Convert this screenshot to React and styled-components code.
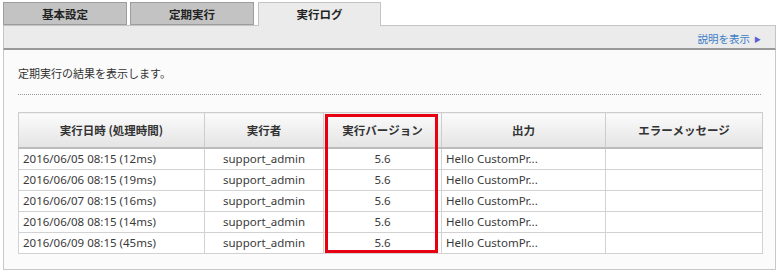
import React from "react"
import styled, { createGlobalStyle } from "styled-components"

const GlobalStyle = createGlobalStyle`
  html, body {
    margin: 0;
    padding: 0;
    background: #ffffff;
  }
  body {
    font-family: "Noto Sans", "Noto Sans CJK JP", sans-serif;
    font-size: 12px;
    color: #333;
  }
`

const Wrapper = styled.div`
  width: 773px;
  padding: 2px 0 0 3px;
`

const TabRow = styled.div`
  display: flex;
  gap: 3px;
  height: 23px;
  position: relative;
  z-index: 1;
`

const Tab = styled.div`
  width: ${p => (p.$active ? 123 : 124)}px;
  height: ${p => (p.$active ? 24 : 23)}px;
  margin-left: ${p => (p.$active ? 1 : 0)}px;
  box-sizing: border-box;
  display: flex;
  align-items: center;
  justify-content: center;
  font-family: "Noto Sans CJK JP", sans-serif;
  font-weight: bold;
  font-size: 11.5px;
  color: #222;
  background: ${p => (p.$active ? "#ebebeb" : "#c3c3c3")};
  border: 1px solid ${p => (p.$active ? "#c4c4c4" : "#9d9d9d")};
  border-bottom: ${p => (p.$active ? "none" : "1px solid #9d9d9d")};
  padding-bottom: ${p => (p.$active ? 2 : 0)}px;
`

const Bar = styled.div`
  height: 25px;
  box-sizing: border-box;
  background: #ebebeb;
  border: 1px solid #c4c4c4;
  border-bottom: 2px solid #999;
  display: flex;
  align-items: flex-end;
  justify-content: flex-end;
  padding: 0 14px 1px 0;
`

const HelpLink = styled.a`
  color: #3b7dc6;
  font-family: "Noto Sans CJK JP", sans-serif;
  font-size: 10.5px;
  text-decoration: none;
  display: flex;
  align-items: center;
  gap: 4px;
  line-height: 16px;
`

const Arrow = styled.span`
  color: #5a5fd0;
  font-size: 7px;
`

const Content = styled.div`
  background: #fbfbfb;
  border: 1px solid #c8c8c8;
  border-top: none;
  padding: 15px 14px 15px 14px;
`

const Lead = styled.p`
  margin: 0;
  font-family: "Noto Sans CJK JP", sans-serif;
  font-size: 11px;
  line-height: 16px;
  color: #333;
`

const Divider = styled.div`
  margin-top: 13px;
  border-bottom: 1px dotted #999;
`

const TableBox = styled.div`
  position: relative;
  margin-top: 17px;
  width: 744px;
`

const Table = styled.table`
  width: 100%;
  border-collapse: collapse;
  table-layout: fixed;
  background: #fff;
`

const Th = styled.th`
  height: 34px;
  padding: 0;
  font-family: "Noto Sans CJK JP", sans-serif;
  font-size: 11.5px;
  font-weight: bold;
  color: #333;
  background: linear-gradient(#fbfbfb, #e4e4e4);
  border: 1px solid #cdcdcd;
  border-bottom: 2px solid #bcbcbc;
`

const Td = styled.td`
  height: 20px;
  padding: 0 4px;
  font-size: 11.5px;
  line-height: 20px;
  color: #3a3a3a;
  border: 1px solid #d2d2d2;
  text-align: ${p => p.$align || "left"};
  white-space: nowrap;
  overflow: hidden;
`

const Highlight = styled.div`
  position: absolute;
  left: 307px;
  top: 2px;
  width: 113px;
  height: 139px;
  box-sizing: border-box;
  border: 3px solid #e60012;
  pointer-events: none;
`

const cols = [
  { label: "実行日時 (処理時間)", width: 186 },
  { label: "実行者", width: 119 },
  { label: "実行バージョン", width: 118 },
  { label: "出力", width: 164 },
  { label: "エラーメッセージ", width: 157 },
]

const rows = [
  "2016/06/05 08:15 (12ms)",
  "2016/06/06 08:15 (19ms)",
  "2016/06/07 08:15 (16ms)",
  "2016/06/08 08:15 (14ms)",
  "2016/06/09 08:15 (45ms)",
]

const App = () => {
  return (
    <>
      <GlobalStyle />
      <Wrapper>
        <TabRow>
          <Tab>基本設定</Tab>
          <Tab>定期実行</Tab>
          <Tab $active>実行ログ</Tab>
        </TabRow>
        <Bar>
          <HelpLink href="#">
            説明を表示<Arrow>▶</Arrow>
          </HelpLink>
        </Bar>
        <Content>
          <Lead>定期実行の結果を表示します。</Lead>
          <Divider />
          <TableBox>
            <Table>
              <colgroup>
                {cols.map(c => (
                  <col key={c.label} style={{ width: c.width }} />
                ))}
              </colgroup>
              <thead>
                <tr>
                  {cols.map(c => (
                    <Th key={c.label}>{c.label}</Th>
                  ))}
                </tr>
              </thead>
              <tbody>
                {rows.map(date => (
                  <tr key={date}>
                    <Td>{date}</Td>
                    <Td $align="center">support_admin</Td>
                    <Td $align="center">5.6</Td>
                    <Td>Hello CustomPr...</Td>
                    <Td />
                  </tr>
                ))}
              </tbody>
            </Table>
            <Highlight />
          </TableBox>
        </Content>
      </Wrapper>
    </>
  )
}

export default App
